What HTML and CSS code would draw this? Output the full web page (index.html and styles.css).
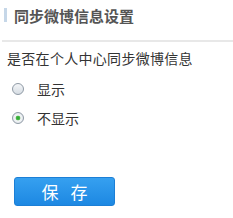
FILE: index.html
```
<!DOCTYPE html>
<html>
  <head>
    <title>同步微博信息设置</title>
    <link rel="stylesheet" href="styles.css">
  </head>
  <body>
    <div class="panel">
      <h2 class="panel-title">同步微博信息设置</h2>
      <div class="panel-body">
        <p class="question">是否在个人中心同步微博信息</p>
        <label class="option">
          <input type="radio" name="sync" value="1">
          <span>显示</span>
        </label>
        <label class="option">
          <input type="radio" name="sync" value="0" checked>
          <span>不显示</span>
        </label>
        <button class="save-btn">保 存</button>
      </div>
    </div>
  </body>
</html>
```

FILE: styles.css
```
body {
  margin: 0;
  background: #fff;
  font-family: "Noto Sans CJK SC", "Liberation Sans", sans-serif;
  color: #333;
}
/* header with blue bar on the left */
.panel-title {
  margin: 0 0 0 2px;
  padding: 8px 0 17px 12px;
  font-size: 15px;
  line-height: 15px;
  font-weight: bold;
  color: #555;
  border-bottom: 2px solid #e8e8e8;
  position: relative;
}
.panel-title::before {
  content: "";
  position: absolute;
  left: 2px;
  top: 8px;
  width: 3px;
  height: 14px;
  background: #c6d7e8;
}
.panel-body {
  padding: 8px 0 0 7px;
}
.question {
  margin: 0 0 15px 0;
  font-size: 14px;
  line-height: 16px;
  letter-spacing: 0.3px;
}
.option {
  display: flex;
  align-items: center;
  gap: 13px;
  height: 16px;
  margin: 0 0 13px 5px;
  font-size: 14px;
  line-height: 16px;
}
/* grey radio circle, green dot when checked */
.option input {
  appearance: none;
  -webkit-appearance: none;
  margin: 0;
  width: 12px;
  height: 12px;
  border: 1px solid #8f9aa5;
  border-radius: 50%;
  background: linear-gradient(#f4f6f8, #d6dde3);
}
.option input:checked {
  background: radial-gradient(circle, #2aa32a 0, #4cbb4c 2px, #dfeadf 2.6px, #f4f6f8 3px, #d6dde3 100%);
}
.save-btn {
  display: block;
  margin: 51px 0 0 7px;
  width: 101px;
  height: 29px;
  border: 1px solid #1c7fd6;
  border-radius: 3px;
  background: linear-gradient(#36a0f0, #1d88e2);
  color: #fff;
  font-family: "Noto Sans CJK SC", sans-serif;
  font-size: 17px;
  letter-spacing: 4px;
  text-indent: 4px;
  cursor: pointer;
}
```
